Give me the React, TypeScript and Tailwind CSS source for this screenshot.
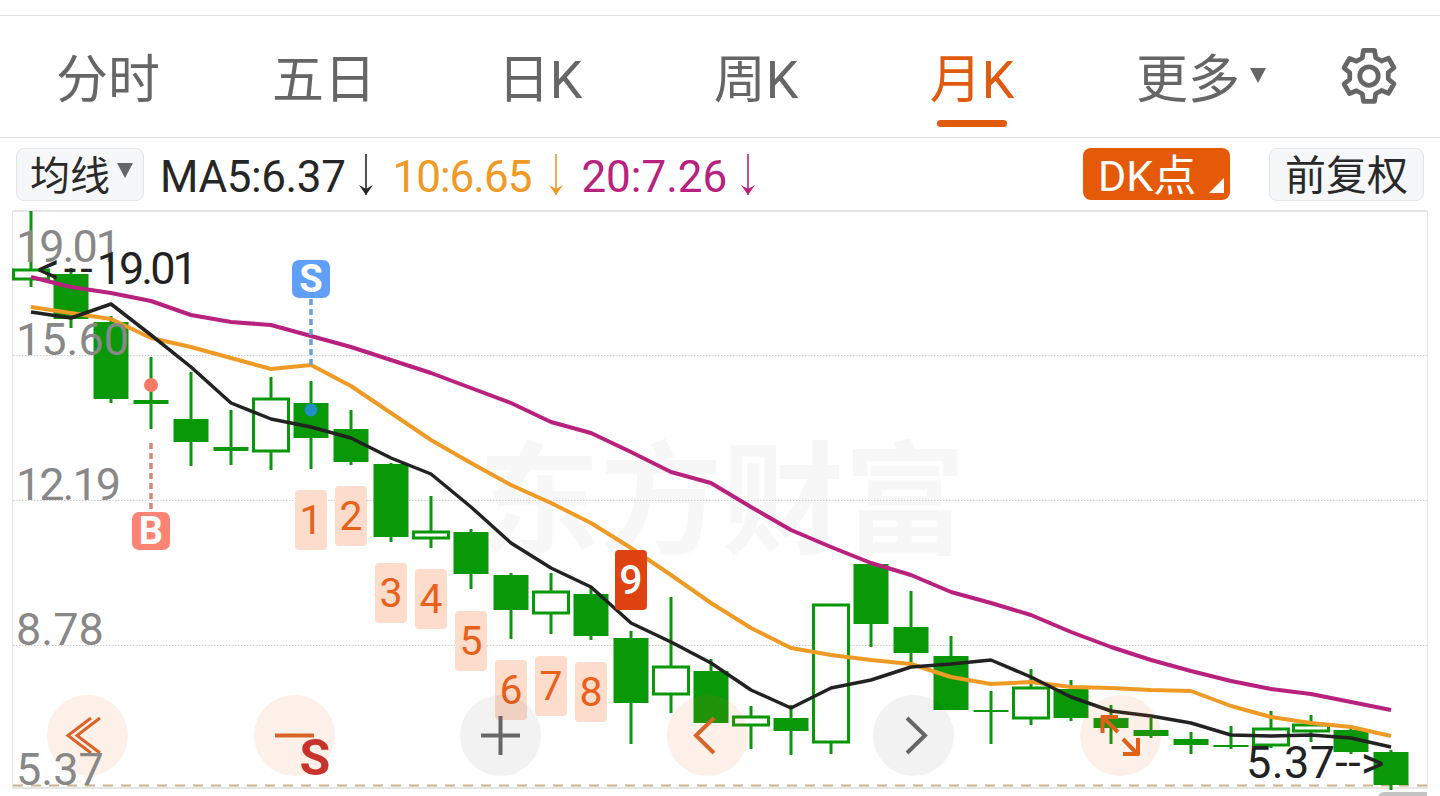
import React from 'react';

const FONT = "font-['Roboto','Noto_Sans_CJK_SC',sans-serif]";

// page coords: x, wick top, wick bottom, body top, body bottom, filled
const CANDLES: [number, number, number, number, number, boolean][] = [
  [31, 211, 287, 270, 279, false],
  [71, 268, 328, 274, 319, true],
  [111, 316, 403, 322, 399, true],
  [151, 357, 429, 400, 404, true],
  [191, 372, 466, 419, 442, true],
  [231, 410, 465, 447, 451, true],
  [271, 377, 470, 399, 451, false],
  [311, 381, 469, 403, 438, true],
  [351, 410, 465, 429, 462, true],
  [391, 463, 542, 464, 537, true],
  [431, 496, 548, 532, 538, false],
  [471, 529, 589, 532, 574, true],
  [511, 573, 639, 575, 610, true],
  [551, 573, 634, 592, 613, false],
  [591, 586, 640, 594, 636, true],
  [631, 631, 744, 638, 703, true],
  [671, 597, 713, 667, 694, false],
  [711, 659, 723, 671, 723, true],
  [751, 706, 749, 717, 725, false],
  [791, 705, 755, 718, 731, true],
  [831, 605, 754, 605, 742, false],
  [871, 564, 647, 564, 624, true],
  [911, 591, 665, 627, 653, true],
  [951, 636, 710, 656, 710, true],
  [991, 691, 744, 710, 712, true],
  [1031, 669, 725, 688, 718, false],
  [1071, 680, 721, 689, 718, true],
  [1111, 705, 744, 718, 728, true],
  [1151, 718, 738, 730, 736, true],
  [1191, 732, 754, 739, 745, true],
  [1231, 726, 749, 745, 747, true],
  [1271, 711, 748, 729, 745, false],
  [1311, 715, 742, 725, 731, false],
  [1351, 725, 754, 730, 752, true],
  [1391, 750, 790, 752, 785, true],
];

const XS = CANDLES.map((c) => c[0]);
const MA20 = [277, 287, 293, 301, 315, 322, 325, 336, 347, 360, 373, 388, 403, 422, 433, 452, 472, 483, 507, 530, 547, 563, 575, 592, 603, 615, 632, 647, 660, 671, 681, 689, 694, 702, 710];
const MA10 = [307, 313, 319, 338, 347, 358, 369, 365, 386, 413, 440, 463, 485, 503, 523, 548, 575, 603, 628, 648, 655, 660, 664, 677, 684, 682, 687, 688, 690, 691, 706, 717, 723, 727, 736];
const MA5 = [312, 318, 304, 335, 367, 403, 419, 427, 438, 458, 474, 507, 543, 568, 587, 623, 642, 663, 690, 708, 688, 680, 667, 664, 660, 677, 697, 711, 716, 723, 735, 736, 735, 738, 747];

const toPoints = (ys: number[]) => ys.map((y, i) => `${XS[i]},${y}`).join(' ');

const TAGS = [
  { n: 1, pos: 'left-[282px] top-[278px]' },
  { n: 2, pos: 'left-[322px] top-[274px]' },
  { n: 3, pos: 'left-[362px] top-[351px]' },
  { n: 4, pos: 'left-[402px] top-[357px]' },
  { n: 5, pos: 'left-[442px] top-[399px]' },
  { n: 6, pos: 'left-[482px] top-[448px]' },
  { n: 7, pos: 'left-[522px] top-[444px]' },
  { n: 8, pos: 'left-[562px] top-[450px]' },
];

const TABS = [
  { label: '分时' },
  { label: '五日' },
  { label: '日K' },
  { label: '周K' },
  { label: '月K', active: true },
];

const Arrow: React.FC<{ className: string }> = ({ className }) => (
  <svg width="18" height="44" viewBox="0 0 18 44" fill="none" stroke="currentColor" className={className}>
    <path d="M9 1V42" strokeWidth="1.6" />
    <path d="M2 32L9 42L16 32L9 36Z" fill="currentColor" stroke="none" />
  </svg>
);

const RoundButton: React.FC<{ tint: string; children: React.ReactNode; extra?: React.ReactNode }> = ({ tint, children, extra }) => (
  <div className={`relative h-[81px] w-[81px] shrink-0 rounded-full ${tint}`}>
    <svg width="81" height="81" viewBox="0 0 81 81" fill="none">
      {children}
    </svg>
    {extra}
  </div>
);

export default function App() {
  return (
    <div className={`h-[796px] w-[1440px] overflow-hidden bg-white ${FONT}`}>
      {/* Period tabs */}
      <div className="mt-[15px] flex h-[123px] items-center border-y border-[#e0e0e0]">
        {TABS.map((t) => (
          <div
            key={t.label}
            className={`relative flex h-full w-[216px] items-center justify-center pt-[8px] text-[52px] leading-none ${t.active ? 'text-[#e05a10]' : 'text-[#666666]'}`}
          >
            {t.label}
            {t.active && <div className="absolute bottom-[10px] left-[73px] h-[7px] w-[70px] rounded-full bg-[#e05a10]" />}
          </div>
        ))}
        <div className="relative flex h-full w-[216px] items-center justify-center pt-[8px] text-[52px] leading-none text-[#666666]">
          更多
          <div className="absolute left-[170px] top-[52px] h-0 w-0 border-x-[8px] border-t-[15px] border-x-transparent border-t-[#666666]" />
        </div>
        <svg width="60" height="60" viewBox="0 0 24 24" fill="none" stroke="#666666" strokeWidth="1.9" strokeLinejoin="round" className="ml-[43px]">
          <path d="M9.8 1.3h4.4l.5 3 2.3 1.3 2.8-1.1 2.2 3.8-2.3 1.9v2.6l2.3 1.9-2.2 3.8-2.8-1.1-2.3 1.3-.5 3H9.8l-.5-3L7 17.5l-2.8 1.1L2 14.8l2.3-1.9v-2.6L2 8.4l2.2-3.8L7 5.7l2.3-1.3z" />
          <circle cx="12" cy="11.6" r="3.7" />
        </svg>
      </div>

      {/* MA legend row */}
      <div className="flex h-[72px] items-center text-[44px] leading-none">
        <div className="ml-[16px] flex h-[53px] w-[128px] items-center rounded-[8px] border border-[#e3e4e6] bg-[#f6f7f9] pl-[13px] pt-[5px] text-[40px] text-[#2a2a2a]">
          均线
          <div className="ml-[7px] -mt-[13px] h-0 w-0 border-x-[8px] border-t-[15px] border-x-transparent border-t-[#666666]" />
        </div>
        <span className="ml-[16px] mt-[5px] tracking-[-0.4px] text-[#262626]">MA5:6.37</span>
        <Arrow className="ml-[12px] mt-[2px] text-[#262626]" />
        <span className="ml-[17px] mt-[5px] tracking-[-1px] text-[#ee9a25]">10:6.65</span>
        <Arrow className="ml-[16px] mt-[2px] text-[#ee9a25]" />
        <span className="ml-[16px] mt-[5px] text-[#b8217e]">20:7.26</span>
        <Arrow className="ml-[12px] mt-[2px] text-[#b8217e]" />
        <div className="relative ml-auto flex h-[52px] w-[147px] items-center rounded-[8px] bg-[#e55a09] pl-[15px] pt-[4px] text-[43px] text-white">
          DK点
          <div className="absolute bottom-[7px] right-[6px] h-0 w-0 border-b-[15px] border-l-[15px] border-b-white border-l-transparent" />
        </div>
        <div className="ml-[39px] mr-[16px] flex h-[53px] w-[155px] items-center justify-center rounded-[8px] border border-[#e3e4e6] bg-[#f6f7f9] pt-[4px] text-[41px] text-[#2a2a2a]">
          前复权
        </div>
      </div>

      {/* Chart panel */}
      <div className="ml-[12px] h-[579px] w-[1416px] border-x border-b-2 border-t-2 border-[#e6e6e6]">
        <div className="relative h-full w-full">
          <div className="absolute left-[465px] top-[230px] whitespace-nowrap text-[122px] font-bold leading-none text-[#f7f7f7]">
            东方财富
          </div>

          <svg className="absolute inset-0 overflow-visible" width="1414" height="575" viewBox="13 212 1414 575" fill="none">
            <path d="M13 355.5H1427M13 500.5H1427M13 645.5H1427" stroke="#cccccc" strokeWidth="1" strokeDasharray="1.5 1.5" />
            <path d="M13 785.5H1427" stroke="#c9b48e" strokeWidth="2" strokeDasharray="10 8" />
            {CANDLES.map(([x, wt, wb, bt, bb, filled]) => (
              <g key={x} stroke="#089808">
                <path d={`M${x} ${wt}V${bt}M${x} ${bb}V${wb}`} strokeWidth="3" />
                {filled ? (
                  <rect x={x - 17.5} y={bt} width="35" height={bb - bt} fill="#089808" stroke="none" />
                ) : (
                  <rect x={x - 17.5} y={bt} width="35" height={bb - bt} fill="#ffffff" strokeWidth="3" />
                )}
              </g>
            ))}
            <polyline points={toPoints(MA20)} stroke="#b8217e" strokeWidth="4" strokeLinejoin="round" />
            <polyline points={toPoints(MA10)} stroke="#ee9a25" strokeWidth="4" strokeLinejoin="round" />
            <polyline points={toPoints(MA5)} stroke="#222222" strokeWidth="3.5" strokeLinejoin="round" />
            <path d="M311 299V365" stroke="#6b9fd8" strokeWidth="3.5" strokeDasharray="6 4" />
            <path d="M151 443V511" stroke="#d9857a" strokeWidth="3.5" strokeDasharray="6 4" />
            <circle cx="311" cy="410" r="6.5" fill="#1f8fc6" />
            <circle cx="151" cy="385" r="7" fill="#f47a66" />
          </svg>

          {/* Signal badges */}
          <div className="absolute left-[279px] top-[48px] flex h-[38px] w-[38px] items-center justify-center rounded-[7px] bg-[#609ff8] text-[38px] font-bold leading-none text-white">S</div>
          <div className="absolute left-[119px] top-[300px] flex h-[38px] w-[38px] items-center justify-center rounded-[7px] bg-[#fb8373] text-[38px] font-bold leading-none text-white">B</div>

          {/* Sequence counters */}
          {TAGS.map((t) => (
            <div key={t.n} className={`absolute flex h-[60px] w-[32px] items-center justify-center rounded-[4px] bg-[#fddccb] text-[41px] leading-none text-[#e8611a] ${t.pos}`}>
              {t.n}
            </div>
          ))}
          <div className="absolute left-[602px] top-[338px] flex h-[60px] w-[32px] items-center justify-center rounded-[4px] bg-[#e04312] text-[41px] font-medium leading-none text-white">9</div>

          {/* Round chart controls */}
          <div className="absolute left-[34px] top-[483px] flex gap-[125.5px]">
            <RoundButton tint="bg-[#f06a20]/10">
              <path d="M44 23L21 40.5L44 58M53 23L30 40.5L53 58" stroke="#d9642a" strokeWidth="3" />
            </RoundButton>
            <RoundButton
              tint="bg-[#f06a20]/10"
              extra={<div className="absolute left-[46px] top-[38px] text-[50px] font-bold leading-none text-[#c8322c]">S</div>}
            >
              <path d="M21 40.5H60" stroke="#d9642a" strokeWidth="4" />
            </RoundButton>
            <RoundButton tint="bg-black/5">
              <path d="M40.5 21V60M21 40.5H60" stroke="#666666" strokeWidth="4" />
            </RoundButton>
            <RoundButton tint="bg-[#f06a20]/10">
              <path d="M47 23L29 40.5L47 58" stroke="#d9642a" strokeWidth="4" />
            </RoundButton>
            <RoundButton tint="bg-black/5">
              <path d="M34 23L52 40.5L34 58" stroke="#666666" strokeWidth="4" />
            </RoundButton>
            <RoundButton tint="bg-[#f06a20]/10">
              <path d="M21 22H38M22.5 20.5V38M22 21.5L38 37M59 59H43M58 60.5V43M58 59.5L43 44" stroke="#e0601a" strokeWidth="4" />
            </RoundButton>
          </div>

          {/* Price axis labels */}
          <div className="absolute left-[3px] top-[12px] flex flex-col text-[45px] leading-none text-[#888888]">
            <span className="tracking-[-2px]">19.01</span>
            <span className="mt-[48px]">15.60</span>
            <span className="mt-[100px] tracking-[-2px]">12.19</span>
            <span className="mt-[100px]">8.78</span>
            <span className="mt-[95px]">5.37</span>
          </div>

          <div className="absolute left-[24px] top-[34px] text-[45px] leading-none text-[#222222]">
            <span className="tracking-[4px]">&lt;--</span>
            <span className="tracking-[-3px]">19.01</span>
          </div>
          <div className="absolute left-[1233px] top-[528px] text-[45px] leading-none tracking-[0.4px] text-[#222222]">5.37--&gt;</div>
        </div>
      </div>
      <div className="ml-[1378px] mt-[3px] h-[6px] w-[49px] rounded-tl-[12px] bg-[#c4c4c4]" />
    </div>
  );
}
